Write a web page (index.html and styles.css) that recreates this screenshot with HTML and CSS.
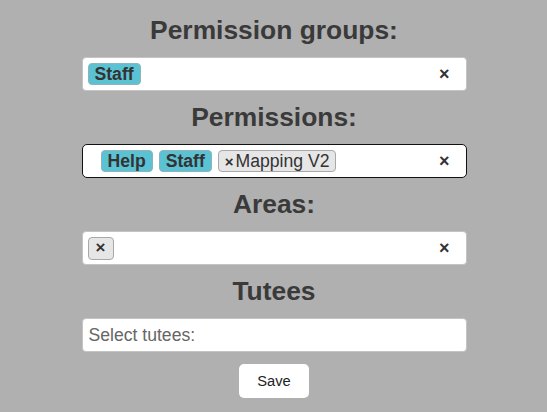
FILE: index.html
```html
<!DOCTYPE html>
<html lang="en">
<head>
    <meta charset="UTF-8">
    <meta name="viewport" content="width=device-width, initial-scale=1.0">
    <title>Edit user</title>
    <link rel="stylesheet" href="styles.css">
</head>
<body>

    <div class="form">
        <h2>Permission groups:</h2>
        <div class="select">
            <div class="chips">
                <span class="chip chip-info">Staff</span>
            </div>
            <span class="clear">&times;</span>
        </div>

        <h2>Permissions:</h2>
        <!-- focused select -->
        <div class="select focused">
            <div class="chips indent">
                <span class="chip chip-info">Help</span>
                <span class="chip chip-info">Staff</span>
                <span class="chip chip-plain"><span class="chip-x">&times;</span>Mapping V2</span>
            </div>
            <span class="clear">&times;</span>
        </div>

        <h2>Areas:</h2>
        <div class="select">
            <div class="chips">
                <span class="chip chip-plain chip-empty"><span class="chip-x">&times;</span></span>
            </div>
            <span class="clear">&times;</span>
        </div>

        <h2>Tutees</h2>
        <input type="text" class="text-input" placeholder="Select tutees:">

        <button class="save">Save</button>
    </div>

</body>
</html>
```

FILE: styles.css
```css
html, body {
    margin: 0;
}

body {
    background: #b0b0b0;
    font-family: "Liberation Sans", Arial, sans-serif;
    color: #333;
    padding-top: 16px;
    padding-left: 1px;
}

.form {
    width: 385px;
    margin: 0 auto;
    display: flex;
    flex-direction: column;
    align-items: stretch;
    gap: 12px;
}

h2 {
    margin: 0;
    font-size: 26.4px;
    line-height: 29px;
    font-weight: bold;
    text-align: center;
    color: #3a3a3a;
}

/* Select boxes */
.select {
    height: 34px;
    box-sizing: border-box;
    display: flex;
    align-items: center;
    justify-content: space-between;
    background: white;
    border: 1px solid #c4c4c4;
    border-radius: 4px;
    padding: 0 16px 0 5px;
}

.select.focused {
    border-color: #111;
    border-radius: 5px;
}

.chips {
    display: flex;
    align-items: center;
    gap: 6px;
}

.chips.indent {
    padding-left: 13px;
}

.chip {
    display: inline-flex;
    align-items: center;
    height: 22px;
    box-sizing: border-box;
    padding: 0 6px;
    border-radius: 4px;
    font-size: 17.6px;
    color: #333;
}

.chip-info {
    background: #5bc2d3;
    border: 1px solid #8fb3ba;
    font-weight: bold;
}

.chip-plain {
    background: #e6e6e6;
    border: 1px solid #a8a8a8;
}

.chip-x {
    font-weight: bold;
    font-size: 15px;
    margin-right: 2px;
}

.chip-empty {
    width: 26px;
    height: 23px;
    justify-content: center;
    padding: 0;
}

.chip-empty .chip-x {
    margin: 0;
    font-size: 17px;
}

.clear {
    font-weight: bold;
    font-size: 18px;
    color: #333;
}

/* Text input */
.text-input {
    height: 34px;
    box-sizing: border-box;
    border: 1px solid #c4c4c4;
    border-radius: 4px;
    padding: 0 6px;
    font-family: "Liberation Sans", Arial, sans-serif;
    font-size: 17.6px;
    background: white;
}

.text-input::placeholder {
    color: #666;
}

.save {
    align-self: center;
    width: 70px;
    height: 34px;
    background: white;
    border: none;
    border-radius: 5px;
    font-family: "Liberation Sans", Arial, sans-serif;
    font-size: 14.7px;
    color: #222;
    cursor: pointer;
}
```
